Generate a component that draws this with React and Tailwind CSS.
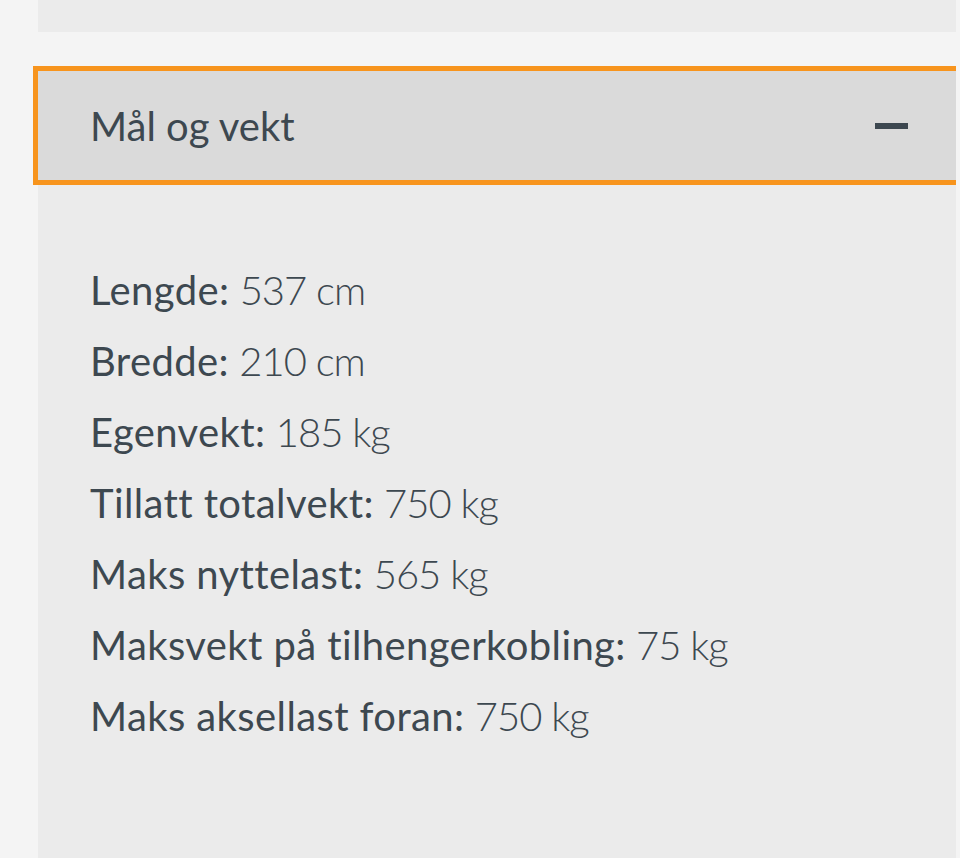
const specs = [
  { label: 'Lengde', value: '537 cm' },
  { label: 'Bredde', value: '210 cm' },
  { label: 'Egenvekt', value: '185 kg' },
  { label: 'Tillatt totalvekt', value: '750 kg' },
  { label: 'Maks nyttelast', value: '565 kg' },
  { label: 'Maksvekt på tilhengerkobling', value: '75 kg' },
  { label: 'Maks aksellast foran', value: '750 kg' },
];

const App = () => {
  return (
    <div className="h-[858px] overflow-hidden bg-[#f4f4f4] text-[#3d4850] font-['Lato','Open_Sans',sans-serif]">
      <div className="ml-[38px] mr-[4px] flex flex-col h-full">
        <div className="h-[32px] bg-[#ebebeb]" />
        <div className="h-[34px]" />

        <button
          type="button"
          className="-ml-[5px] h-[119px] flex items-center justify-between border-[5px] border-r-0 border-[#f7941d] bg-[#dadada] pl-[52px] pr-[48px] text-left"
        >
          <span className="text-[40px] leading-none">Mål og vekt</span>
          <span className="block w-[33px] h-[6px] bg-[#3d4850]" />
        </button>

        <div className="flex-1 bg-[#ebebeb] pl-[52px] pt-[70px]">
          <ul className="flex flex-col">
            {specs.map((s) => (
              <li key={s.label} className="text-[40px] leading-[71px]">
                <span className="font-normal tracking-[0.4px]">{s.label}:</span>{' '}
                <span className="font-light tracking-[-1px]">{s.value}</span>
              </li>
            ))}
          </ul>
        </div>
      </div>
    </div>
  );
};

export default App;
